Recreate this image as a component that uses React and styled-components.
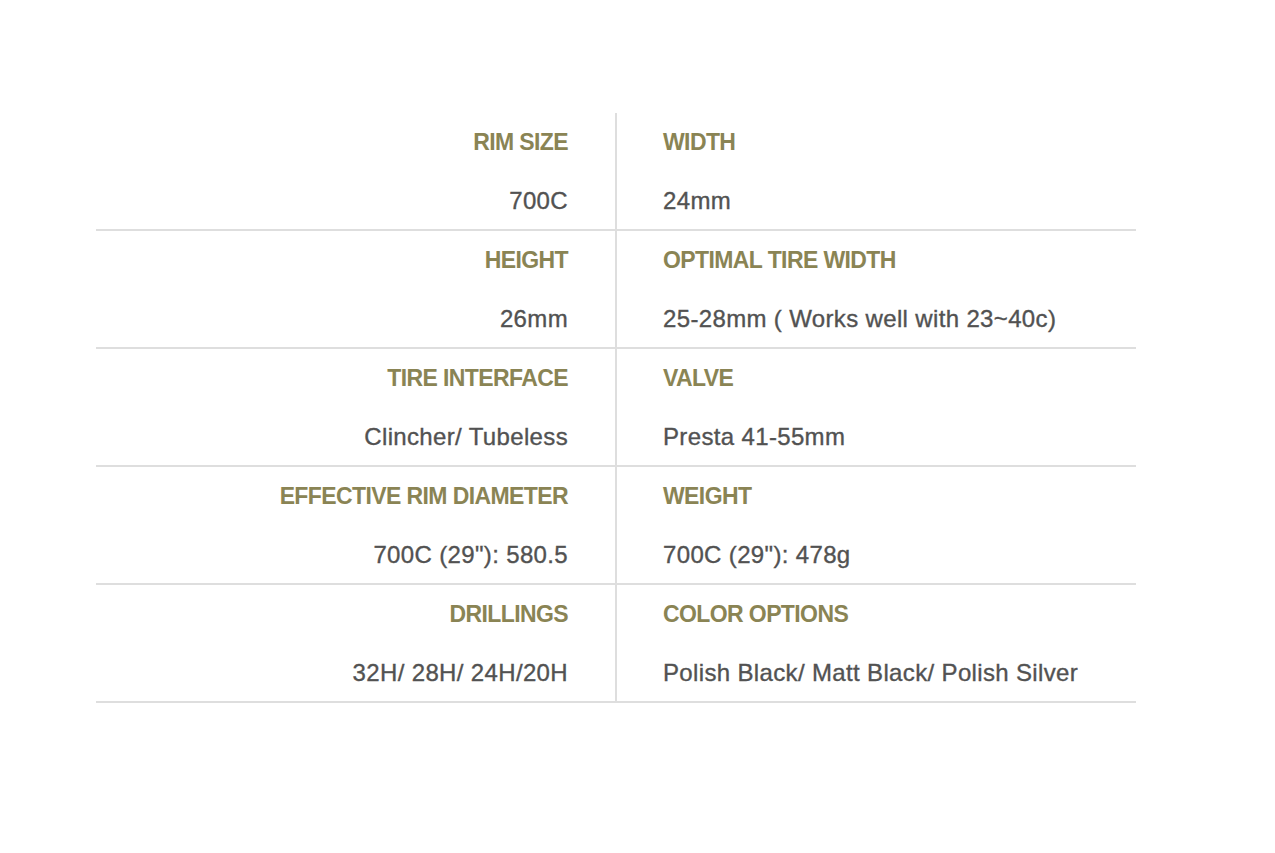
import React from "react";
import styled, { createGlobalStyle } from "styled-components";

const GlobalStyle = createGlobalStyle`
  html, body {
    margin: 0;
    padding: 0;
    background: #ffffff;
  }
  body {
    font-family: "Liberation Sans", Arial, sans-serif;
  }
`;

const Page = styled.div`
  width: 1275px;
  height: 853px;
  box-sizing: border-box;
  padding: 113px 0 0 96px;
  background: #fff;
`;

const Table = styled.div`
  width: 1040px;
  display: flex;
  flex-direction: column;
`;

const Row = styled.div`
  display: grid;
  grid-template-columns: 521px 1fr;
  border-bottom: 2px solid #dedede;
`;

const Cell = styled.div`
  display: flex;
  flex-direction: column;
  gap: 35px;
  padding: 17px 0 16px;
  align-items: ${p => (p.$side === "left" ? "flex-end" : "flex-start")};
  padding-right: ${p => (p.$side === "left" ? "47px" : "0")};
  padding-left: ${p => (p.$side === "left" ? "0" : "46px")};
  border-right: ${p => (p.$side === "left" ? "2px solid #dedede" : "none")};
`;

const Label = styled.div`
  font-size: 23px;
  line-height: 24px;
  font-weight: 700;
  letter-spacing: -0.6px;
  color: #8a8454;
  white-space: nowrap;
`;

const Value = styled.div`
  font-size: 24px;
  line-height: 24px;
  letter-spacing: 0.35px;
  color: #525252;
  -webkit-text-stroke: 0.35px #525252;
  white-space: nowrap;
`;

const specs = [
  ["RIM SIZE", "700C", "WIDTH", "24mm"],
  ["HEIGHT", "26mm", "OPTIMAL TIRE WIDTH", "25-28mm ( Works well with 23~40c)"],
  ["TIRE INTERFACE", "Clincher/ Tubeless", "VALVE", "Presta 41-55mm"],
  ["EFFECTIVE RIM DIAMETER", "700C (29\"): 580.5", "WEIGHT", "700C (29\"): 478g"],
  ["DRILLINGS", "32H/ 28H/ 24H/20H", "COLOR OPTIONS", "Polish Black/ Matt Black/ Polish Silver"],
];

export default function App() {
  return (
    <>
      <GlobalStyle />
      <Page>
        <Table>
          {specs.map(([l1, v1, l2, v2]) => (
            <Row key={l1}>
              <Cell $side="left">
                <Label>{l1}</Label>
                <Value>{v1}</Value>
              </Cell>
              <Cell $side="right">
                <Label>{l2}</Label>
                <Value>{v2}</Value>
              </Cell>
            </Row>
          ))}
        </Table>
      </Page>
    </>
  );
}
